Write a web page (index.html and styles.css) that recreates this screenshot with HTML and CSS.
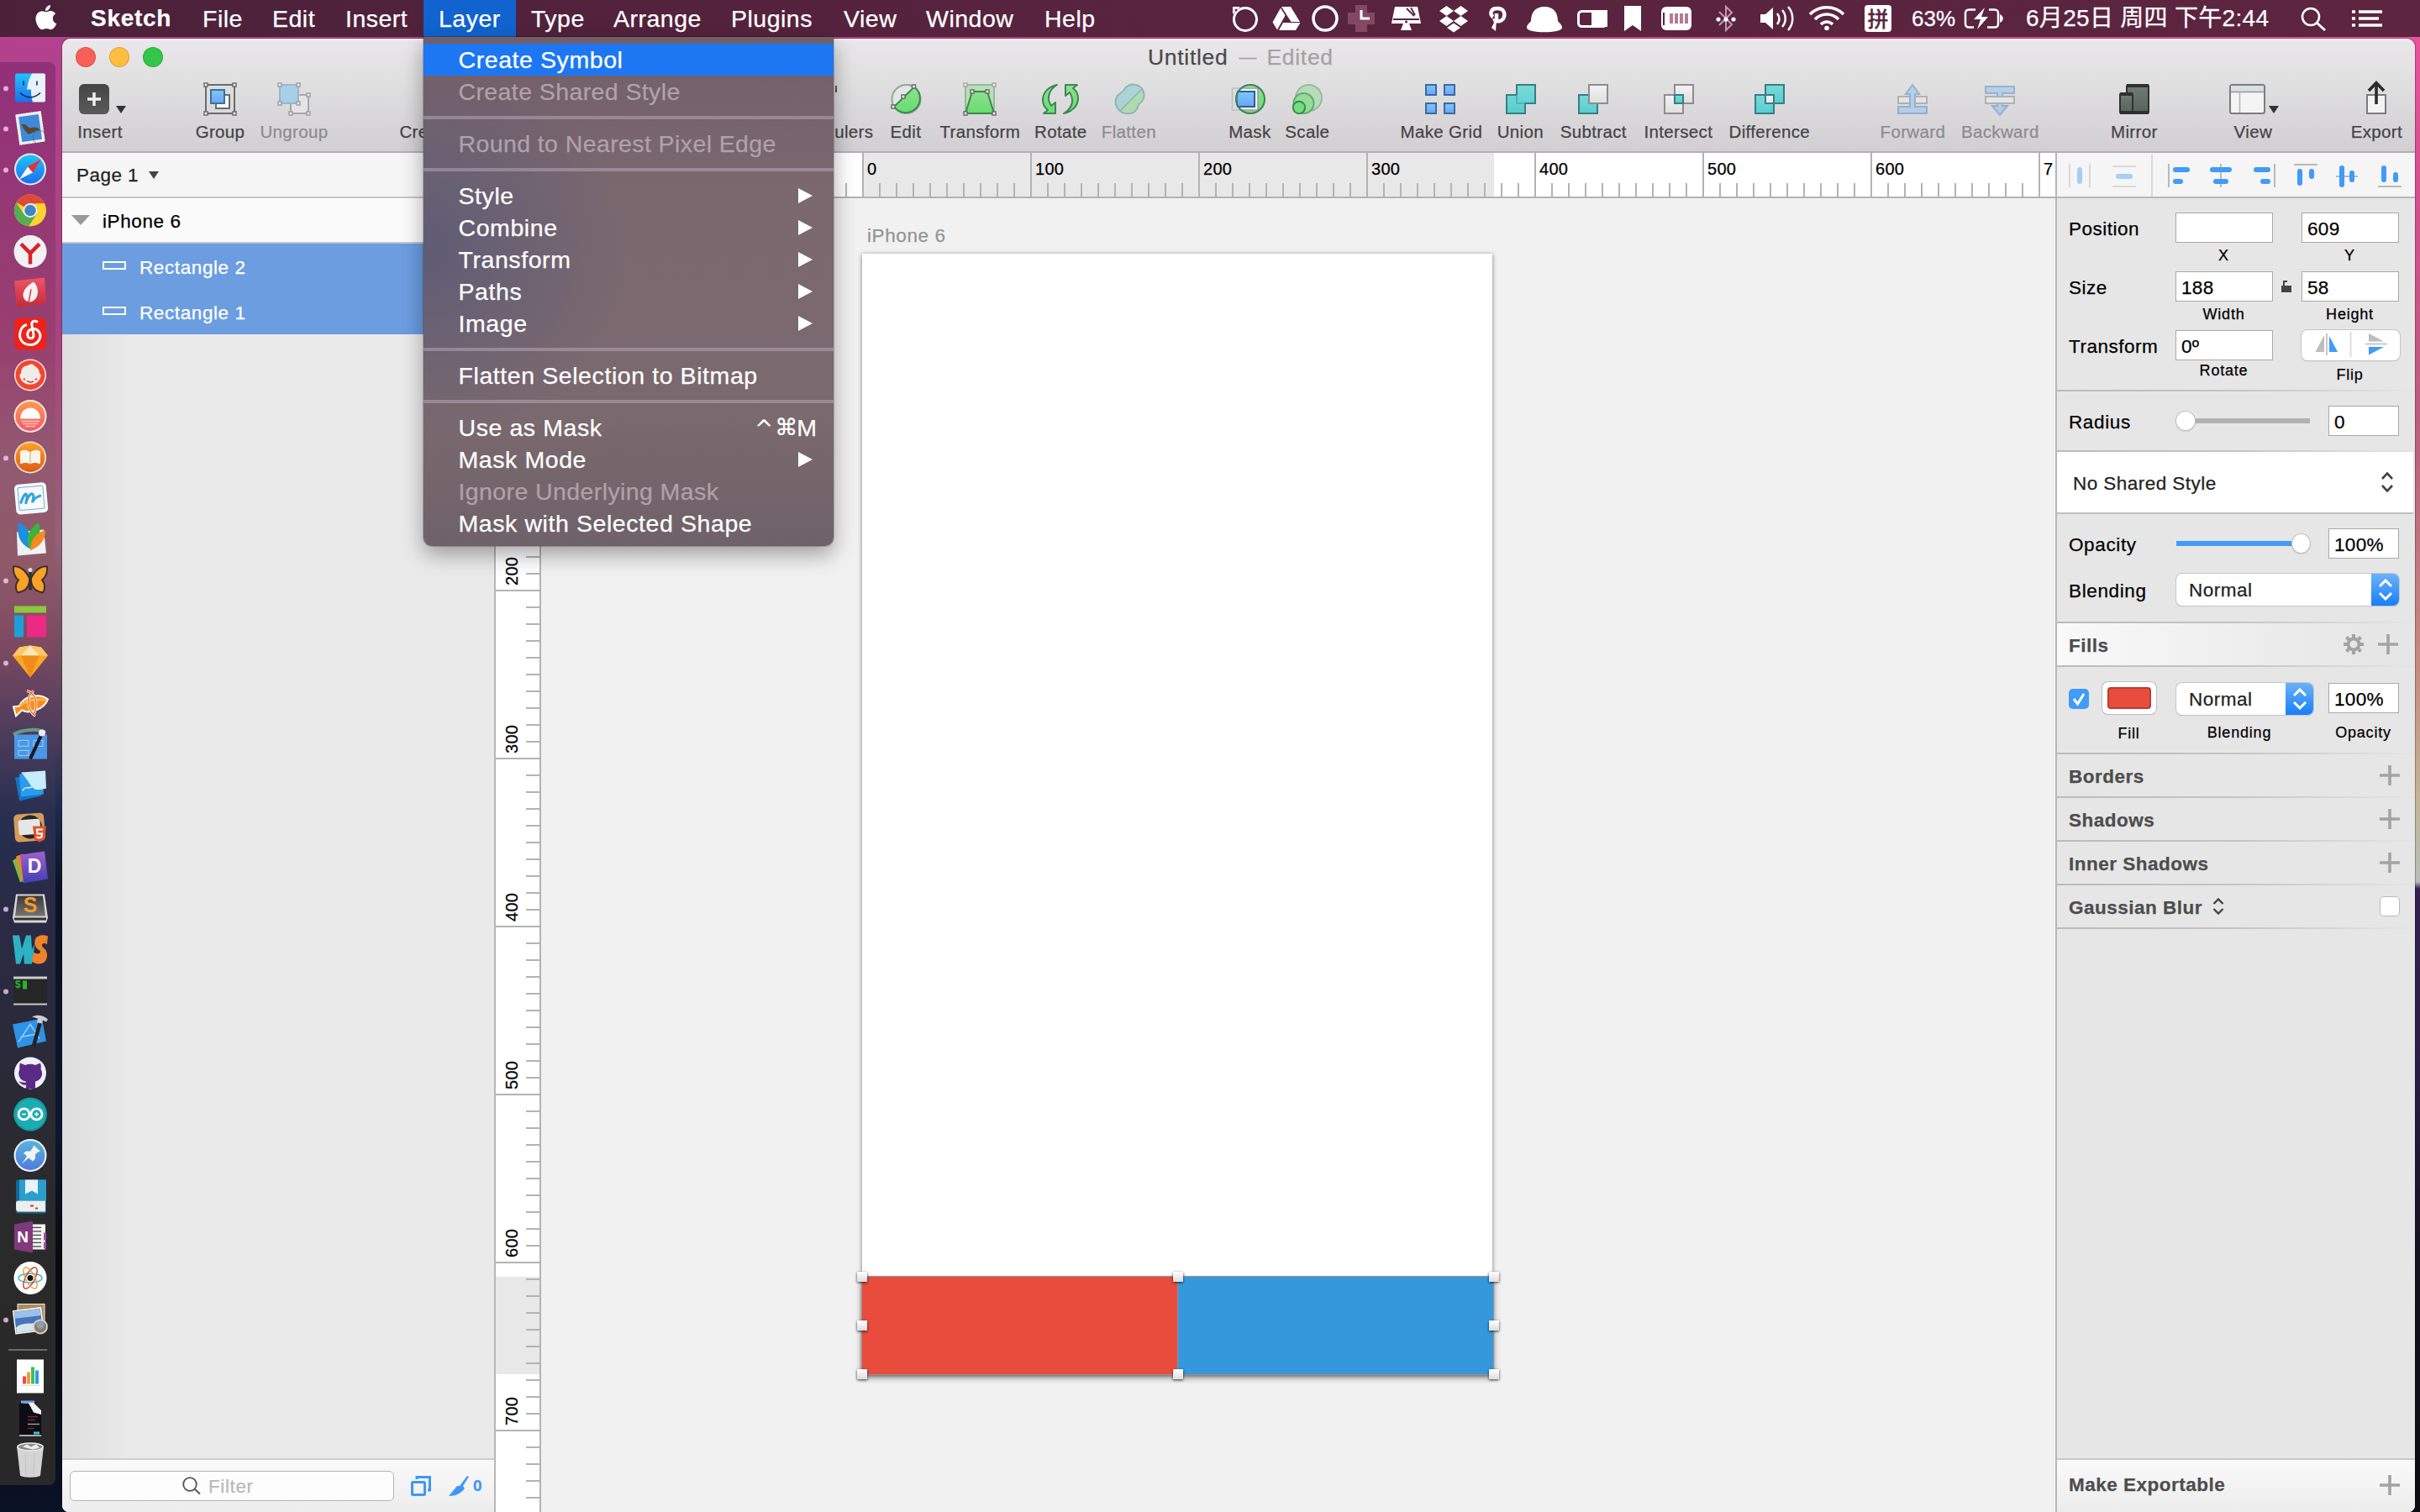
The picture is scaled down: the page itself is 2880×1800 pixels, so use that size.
FILE: index.html
```html
<!DOCTYPE html>
<html lang="zh">
<head>
<meta charset="utf-8">
<title>Untitled</title>
<link rel="stylesheet" href="styles.css">
</head>
<body>
<svg class="defs" width="0" height="0">
  <defs>
    <linearGradient id="gBlue" x1="0" y1="0" x2="0" y2="1"><stop offset="0" stop-color="#7cc8fb"/><stop offset="1" stop-color="#6ba6f2"/></linearGradient>
    <linearGradient id="gGreen" x1="0" y1="0" x2="0" y2="1"><stop offset="0" stop-color="#8fe08f"/><stop offset="1" stop-color="#66dd6e"/></linearGradient>
    <linearGradient id="gTeal" x1="0" y1="0" x2="0" y2="1"><stop offset="0" stop-color="#7adada"/><stop offset="1" stop-color="#58cdd0"/></linearGradient>
    <linearGradient id="gGray" x1="0" y1="0" x2="0" y2="1"><stop offset="0" stop-color="#f3f3f3"/><stop offset="1" stop-color="#dedede"/></linearGradient>
    <linearGradient id="gDark" x1="0" y1="0" x2="0" y2="1"><stop offset="0" stop-color="#454545"/><stop offset="1" stop-color="#5a5a5a"/></linearGradient>
    <linearGradient id="gScreen" x1="0" y1="0" x2="0" y2="1"><stop offset="0" stop-color="#6e7d76"/><stop offset="1" stop-color="#56625c"/></linearGradient>
    <linearGradient id="dSky" x1="0" y1="0" x2="0" y2="1"><stop offset="0" stop-color="#1fc4fb"/><stop offset="1" stop-color="#1b6ff0"/></linearGradient>
    <linearGradient id="dRed" x1="0" y1="0" x2="0" y2="1"><stop offset="0" stop-color="#ee5566"/><stop offset="1" stop-color="#c22a3c"/></linearGradient>
    <linearGradient id="dOrange" x1="0" y1="0" x2="0" y2="1"><stop offset="0" stop-color="#fda22a"/><stop offset="1" stop-color="#dd5c14"/></linearGradient>
    <linearGradient id="dSun" x1="0" y1="0" x2="0" y2="1"><stop offset="0" stop-color="#ff9a4a"/><stop offset="1" stop-color="#fa5668"/></linearGradient>
    <linearGradient id="dPurple" x1="0" y1="0" x2="0" y2="1"><stop offset="0" stop-color="#a35fd0"/><stop offset="1" stop-color="#3f3fb4"/></linearGradient>
    <linearGradient id="dPin" x1="0" y1="0" x2="0" y2="1"><stop offset="0" stop-color="#58b4dc"/><stop offset="1" stop-color="#4f7be0"/></linearGradient>
    <linearGradient id="dGray" x1="0" y1="0" x2="0" y2="1"><stop offset="0" stop-color="#3a3a3a"/><stop offset="1" stop-color="#747474"/></linearGradient>
  </defs>
</svg>

<header class="menubar">
  <svg class="apple" width="89" height="44" viewBox="0 0 89 44"><path fill="#fff" d="M60 6c.4 3.400-2.600 7-6 7-.4-3.300 2.700-6.700 6-7zM54.800 14.300c1.300 0 3-1.300 5.500-1.300 2.300 0 4.600 1.300 5.900 3.300-5 3-4.200 10 1 12-1 2.700-3.800 7-6.700 7-2 0-2.800-1.200-5.200-1.200s-3.300 1.200-5.200 1.200c-3.300 0-7.600-7-7.600-12.700 0-5.600 3.600-9.300 7.500-9.300 2.200 0 3.700 1 4.800 1z"/></svg>
  <nav class="menus">
    <span class="m m-app">Sketch</span><span class="m m-file">File</span><span class="m m-edit">Edit</span><span class="m m-insert">Insert</span><span class="m m-layer">Layer</span><span class="m m-type">Type</span><span class="m m-arrange">Arrange</span><span class="m m-plugins">Plugins</span><span class="m m-view">View</span><span class="m m-window">Window</span><span class="m m-help">Help</span>
  </nav>
  <div class="status">
    <svg width="45" height="44" viewBox="1460 0 45 44"><circle cx="1481" cy="23" r="13.500" fill="none" stroke="#fff" stroke-width="3"/><path d="M1466 8h9l-9 9z" fill="#fff"/><circle cx="1470" cy="12" r="1.500" fill="#5a233e"/></svg>
    <svg width="48" height="44" viewBox="1505 0 48 44"><g fill="#fff"><path d="M1524 8h11l11 18h-10.500z"/><path d="M1523 9.500l5.500 9-9.500 17-5.500-9z"/><path d="M1526 27h20.500l-5.500 9h-20z"/></g></svg>
    <svg width="46" height="44" viewBox="1553 0 46 44"><circle cx="1576" cy="22" r="14" fill="none" stroke="#fff" stroke-width="3.500"/></svg>
    <svg width="48" height="44" viewBox="1599 0 48 44"><path d="M1612 6h14v9h9v14h-9v9h-14v-9h-9v-14h9z" fill="#854862"/><path d="M1619 12v10h10" fill="none" stroke="#fff" stroke-width="3"/></svg>
    <svg width="56" height="44" viewBox="1647 0 56 44"><g fill="#fff"><path d="M1659 8h27l4 20h-35z"/><path d="M1669 28h7l3 8h-13z"/></g><path d="M1657 23h31M1673 10l9 9M1678 9l5 9" stroke="#5a233e" stroke-width="1.800"/><circle cx="1672.500" cy="26" r="1.500" fill="#5a233e"/></svg>
    <svg width="58" height="44" viewBox="1703 0 58 44"><g fill="#fff"><path d="M1720.500 7l8.500 6-8.500 6-8.500-6zM1737.500 7l8.500 6-8.500 6-8.500-6zM1720.500 19l8.500 6-8.500 6-8.500-6zM1737.500 19l8.500 6-8.500 6-8.500-6zM1729 27.500l8 5.500-8 5.500-8-5.500z"/></g></svg>
    <svg width="47" height="44" viewBox="1761 0 47 44"><path d="M1776 20c-4-2-4-10 5-10 8 0 9 6 8 10-1 4-5 6-9 5v-9" fill="none" stroke="#fff" stroke-width="4.500"/><path d="M1775 22l2 5-3 6 5 4 1-14z" fill="#fff"/></svg>
    <svg width="60" height="44" viewBox="1808 0 60 44"><path d="M1816 33c0-4 4-6 5-8 0-10 5-17 16-17s16 7 16 17c1 2 5 4 5 8 0 7-42 7-42 0z" fill="#fff"/></svg>
    <svg width="54" height="44" viewBox="1868 0 54 44"><rect x="1877.500" y="13.500" width="33" height="18" rx="4" fill="none" stroke="#fff" stroke-width="3"/><path d="M1893 12h19v20h-19z" fill="#fff"/></svg>
    <svg width="42" height="44" viewBox="1922 0 42 44"><path d="M1932 7h20v30l-10-7-10 7z" fill="#fff"/></svg>
    <svg width="60" height="44" viewBox="1964 0 60 44"><rect x="1976" y="8" width="36" height="28" rx="6" fill="#fff"/><path d="M1979 15v15" stroke="#5a233e" stroke-width="2"/><path d="M1988 16v12M1994 16v12M2000 16v12M2006 16v12" stroke="#b57a95" stroke-width="4"/></svg>
    <svg width="58" height="44" viewBox="2024 0 58 44"><path d="M2045 14l15 15-7 7V8l7 7-15 15" fill="none" stroke="#c796ad" stroke-width="2"/><g fill="#fff"><circle cx="2044" cy="23" r="2.600"/><circle cx="2053" cy="23" r="2.600"/><circle cx="2062" cy="23" r="2.600"/></g></svg>
    <svg width="60" height="44" viewBox="2082 0 60 44"><path d="M2094 17h6l9-8v26l-9-8h-6z" fill="#fff"/><path d="M2114 16c3 4 3 9 0 13M2120 12c5 6 5 14 0 20M2127 8c7 8 7 20 0 28" fill="none" stroke="#fff" stroke-width="2.500"/></svg>
    <svg width="66" height="44" viewBox="2142 0 66 44"><path d="M2153 17c11-11 29-11 40 0M2159 23c8-8 20-8 28 0M2166 29c4-4 10-4 14 0" fill="none" stroke="#fff" stroke-width="3.600"/><circle cx="2173" cy="33.500" r="2.800" fill="#fff"/></svg>
    <span class="ime">拼</span>
    <span class="pct">63%</span>
    <svg width="64" height="44" viewBox="2332 0 64 44"><g fill="none" stroke="#fff" stroke-width="2.500"><path d="M2350 11.500h-8a4 4 0 0 0-4 4v13a4 4 0 0 0 4 4h6M2366 11.500h7a4 4 0 0 1 4 4v13a4 4 0 0 1-4 4h-9"/></g><path d="M2379 17c5 2 5 8 0 10z" fill="#fff"/><path d="M2361 9l-13 14h8l-4 12 13-15h-8z" fill="#fff"/></svg>
    <span class="date">6月25日 周四 下午2:44</span>
    <svg width="70" height="44" viewBox="2716 0 70 44"><circle cx="2749" cy="20" r="10" fill="none" stroke="#fff" stroke-width="2.600"/><path d="M2756 27l10 9" stroke="#fff" stroke-width="3"/></svg>
    <svg width="92" height="44" viewBox="2786 0 92 44"><path d="M2798 14h4M2798 22h4M2798 30h4M2806 14h28M2806 22h24M2806 30h28" stroke="#fff" stroke-width="3.600"/></svg>
  </div>
</header>

<div class="desk">
  <aside class="dock">
    <svg class="on" viewBox="-36 -24.450 66 48.900"><rect x="-18" y="-17" width="36" height="34" rx="2" fill="url(#dSky)"/><path d="M2-17h14a2 2 0 0 1 2 2v30a2 2 0 0 1-2 2H3C1 10 1 6 1 2h-5C-3-6-1-12 2-17z" fill="#e8f1fa"/><path d="M-8-8v5M8-8v5M-12 6c7 7 17 7 24 0" stroke="#1b2c48" stroke-width="1.600" fill="none"/><circle cx="-29" cy="1" r="3"/></svg>
    <svg class="on" viewBox="-36 -24.450 66 48.900"><g transform="rotate(-8)"><rect x="-15" y="-18" width="30" height="36" fill="#f0f0f0" stroke="#fff" stroke-dasharray="2 1"/><rect x="-12" y="-15" width="24" height="30" fill="#3f8ad8"/><path d="M-10-6c6 0 6 4 10 6 5-1 9 0 11 4-5-1-8 3-14 3-2-3-5-6-7-13z" fill="#5d4630"/></g><circle cx="11" cy="11" r="8" fill="none" stroke="#555" opacity=".6"/><circle cx="-29" cy="1" r="3"/></svg>
    <svg class="on" viewBox="-36 -24.450 66 48.900"><circle r="19" fill="#e9eef2"/><circle r="17" fill="url(#dSky)"/><path d="M13-12L3 4-3-3z" fill="#ee2f2f"/><path d="M-13 12L3 4-3-3z" fill="#f6f6f6"/><circle cx="-29" cy="1" r="3"/></svg>
    <svg viewBox="-36 -24.450 66 48.900"><circle r="19" fill="#fdd32f"/><path d="M0 0L-16.500-9.500A19 19 0 0 1 17-8.500L0-8z" fill="#dd4a3a"/><path d="M-16.500-9.500A19 19 0 0 0-2 19L8 4-8 4z" fill="#55ae52"/><circle r="8.500" fill="#f4f4f4"/><circle r="6.800" fill="#3f86c8"/></svg>
    <svg viewBox="-36 -24.450 66 48.900"><circle r="19.500" fill="#f1f1f4"/><path d="M-11-9L0 2 11-9M0 1v14" stroke="#d8222a" stroke-width="4.500" fill="none"/></svg>
    <svg viewBox="-36 -24.450 66 48.900"><path d="M-19-14L17-18 19 13-16 18z" fill="url(#dRed)"/><path d="M4-13c8 8 6 22-4 24-10 0-14-14 4-24z" fill="#f5f1ee"/><path d="M1-4L-2 12" stroke="#d0394a" stroke-width="1.500"/></svg>
    <svg viewBox="-36 -24.450 66 48.900"><rect x="-19" y="-19" width="38" height="38" rx="6" fill="#ee2219"/><path d="M9-14c-5-3-8 0-7 4l2 11c1 6-9 6-7-2 1-5 9-7 13-2 5 7-1 16-10 16S-14 6-12-2c1-5 4-8 8-9" fill="none" stroke="#fff" stroke-width="3"/></svg>
    <svg viewBox="-36 -24.450 66 48.900"><circle r="19" fill="#f3e9e5"/><circle r="17.500" fill="#f2462e"/><path d="M-12 3c-1-2-1-4 1-5 0-6 4-10 8-9 1-2 6-3 8 0 4 2 6 5 6 9 2 1 2 3 1 5-3 11-21 11-24 0z" fill="#f0ece8"/><path d="M-4 7c3 2 6 2 8 0" stroke="#d33" stroke-width="1.500" fill="none"/><circle cx="-7" cy="5" r="1.300" fill="#e55"/><circle cx="7" cy="5" r="1.300" fill="#e55"/></svg>
    <svg viewBox="-36 -24.450 66 48.900"><circle r="19.500" fill="#f3e9e5"/><circle r="17.500" fill="url(#dSun)"/><path d="M-12 3a12 13 0 0 1 24 0z" fill="#fff"/><path d="M-11 6h22M-9 9h18M-6 12h12" stroke="#fbc3bd" stroke-width="1.400"/></svg>
    <svg class="on" viewBox="-36 -24.450 66 48.900"><circle r="19" fill="#f6ece0"/><circle r="17.500" fill="url(#dOrange)"/><path d="M-12-7c4-3 9-2 12 1 3-3 8-4 12-1V8c-4-2-9-2-12 0-3-2-8-2-12 0z" fill="#f8f4ea"/><path d="M0-6V8" stroke="#c8a985"/><circle cx="-29" cy="1" r="3"/></svg>
    <svg viewBox="-36 -24.450 66 48.900"><g transform="rotate(-5)"><rect x="-18" y="-17" width="38" height="36" rx="5" fill="#f7f9fb"/><rect x="-14" y="-13" width="30" height="27" rx="2" fill="none" stroke="#66b4e0"/><path d="M-12 6C-7-6-3-8-4 0l-2 7C-2-4 4-8 4-1l-2 7c4-8 7-5 11-8" fill="none" stroke="#2fa4dd" stroke-width="3"/></g></svg>
    <svg viewBox="-36 -24.450 66 48.900"><path d="M-16-8L16-11 19 17-15 20z" fill="#eef2f6"/><path d="M0 12C-16 4-15-8-14-20-2-14 2-4 0 12z" fill="#1b8fe0"/><path d="M0 12C-8 0 0-14 10-19 14-8 10 2 0 12z" fill="#3cb43c"/><path d="M0 14C0 0 8-8 18-10 18 2 12 8 0 14z" fill="#f58a1f"/></svg>
    <svg class="on" viewBox="-36 -24.450 66 48.900"><g fill="#f9a226" stroke="#3b302c" stroke-width="2"><path d="M-1-2C-6-13-14-17-20-16c-1 8 2 13 6 16-4 5-4 11-1 15C-7 14-2 9-1 2z"/><path d="M1-2C6-13 14-17 20-16c1 8-2 13-6 16 4 5 4 11 1 15C7 14 2 9 1 2z"/></g><path d="M0-10v22" stroke="#333" stroke-width="3.500"/><circle cy="-12" r="2.500" fill="#ddd"/><circle cx="-29" cy="1" r="3"/></svg>
    <svg viewBox="-36 -24.450 66 48.900"><path d="M-19-18h38v8h-38z" fill="#8fc63f"/><path d="M-19-7H-8v26h-11z" fill="#1ba0d9"/><path d="M-4-7h23v26H-4z" fill="#ec2a83"/></svg>
    <svg class="on" viewBox="-36 -24.450 66 48.900"><path d="M-21-8L-13-18 0-20 13-18 21-8 0 18z" fill="#f9a825"/><path d="M-21-8L-13-18 0-20 13-18 21-8z" fill="#fdc766"/><path d="M-11-8L0-20 11-8z" fill="#ffe6b4"/><path d="M-11-8H11L0 18z" fill="#f08c1a"/><circle cx="-29" cy="1" r="3"/></svg>
    <svg viewBox="-36 -24.450 66 48.900"><path d="M-20 4l7-1C-8-9 10-13 21-5 17 7-2 13-10 8l-7 7z" fill="#f88f1c" stroke="#fff" stroke-width="2"/><path d="M-12 2C-4-4 10-6 19-4" stroke="#fdb544" stroke-width="3" fill="none"/><path d="M-4-15c10 2 14 16 8 29M4-15C-5-9-4 8 6 15" fill="none" stroke="#fff" stroke-width="3"/><path d="M-4-15c10 2 14 16 8 29M4-15C-5-9-4 8 6 15" fill="none" stroke="#e86a2a" stroke-width="1.500"/></svg>
    <svg viewBox="-36 -24.450 66 48.900"><path d="M-19-12H20V17h-39z" fill="#4a97e6"/><path d="M-14-5h12v7h-12zM-14 7h12v6h-12zM4-5h11v7H4z" fill="none" stroke="#9fd0fb"/><path d="M-20-12c10-6 30-8 38-2" stroke="#6fbf9e" stroke-width="4" fill="none" opacity=".7"/><path d="M0 17L13-11" stroke="#1a1a22" stroke-width="4"/><circle cx="14" cy="-14" r="4" fill="#f9e8f6"/></svg>
    <svg viewBox="-36 -24.450 66 48.900"><path d="M-18-10L10-12 13 12-13 18z" fill="#1674c4"/><path d="M-13-14L13-15 16 10-11 13z" fill="#2a9cec"/><path d="M-9 6c4-8 8 0 12-6" stroke="#d6effc" stroke-width="1.500" fill="none"/><path d="M-11-16L18-18 19 3C12 5 6 5 4 3 0 0-2-6-11-16z" fill="#c6edfb"/></svg>
    <svg viewBox="-36 -24.450 66 48.900"><g transform="rotate(-4)"><rect x="-19" y="-16" width="36" height="33" rx="5" fill="#d59c58"/><circle r="14" fill="#262626"/><rect x="-14" y="-9" width="26" height="18" rx="3" fill="#e6e6e6"/></g><path d="M3-1h16l-2 16-6 3-6-3z" fill="#e5532d"/><path d="M15 3H8l.5 5H14l-.5 4-3 1-3-1" stroke="#fff" stroke-width="2" fill="none"/></svg>
    <svg viewBox="-36 -24.450 66 48.900"><path d="M-21-8l8-5 6 28-5 3z" fill="#7dbb3c"/><path d="M-17-13l8-3 4 32-4 2z" fill="#f0832a"/><path d="M-12-15L17-19 21 14-8 19z" fill="url(#dPurple)"/><text x="5" y="7" text-anchor="middle" class="glyph g-d">D</text></svg>
    <svg class="on" viewBox="-36 -24.450 66 48.900"><path d="M-17-17h34l4 28-2 6h-38l-2-6z" fill="#d6d6d6"/><path d="M-15-15h30l3 24h-36z" fill="url(#dGray)"/><path d="M-19 11h38v3h-38z" fill="#333"/><text y="5" text-anchor="middle" class="glyph g-s">S</text><circle cx="-29" cy="1" r="3"/></svg>
    <svg viewBox="-36 -24.450 66 48.900"><path d="M-21-17h8l3 16 5-16H1L2 0l5-10v-7L2 17h-9L-8 5l-4 12h-5z" fill="#2bb3c4"/><path d="M21-16C11-20 3-14 6-5c1 5 7 6 6 8-1 3-6 2-8 0L2 14c7 6 19 3 18-8C20-1 14-2 14-5c0-3 4-3 6-1z" fill="#f28227"/></svg>
    <svg class="on" viewBox="-36 -24.450 66 48.900"><rect x="-20" y="-17" width="40" height="34" fill="#262626"/><path d="M-20-17h40v3h-40zM-20 15h40v2h-40z" fill="#ccc"/><path d="M-9-12h5v10h-5z" fill="#2bb52b"/><text x="-18" y="-3" class="glyph g-t">$</text><circle cx="-29" cy="1" r="3"/></svg>
    <svg viewBox="-36 -24.450 66 48.900"><path d="M-21-9L14-16 19 11-15 19z" fill="#2d92e8"/><path d="M-14 12L0-9 11 8M-11 6L10 2" fill="none" stroke="#9cd2fb" stroke-width="1.500"/><path d="M4 17L12-12" stroke="#222" stroke-width="4.500"/><path d="M2-18c6-3 14-2 19 3l-2 3-4-2-1 4-6-1 1-5z" fill="#c9ced2"/></svg>
    <svg viewBox="-36 -24.450 66 48.900"><circle r="19" fill="#eef0fb"/><path d="M-12-12l6 2.500c4-1.500 8-1.500 12 0l6-2.500c1 3 1 5 .5 7 4 7 0 14-6.500 15v8.500h-11V14c-5 1-6-2-9-4 4 0 5 2 9 1v-1c-7-1-11-8-7.500-15-.5-2-.5-4 .5-7z" fill="#5a2a86"/></svg>
    <svg viewBox="-36 -24.450 66 48.900"><circle r="20" fill="#129aa0"/><circle r="18" fill="#1badb2"/><g fill="none" stroke="#fff" stroke-width="2.800"><circle cx="-7.500" r="6.500"/><circle cx="7.500" r="6.500"/></g><path d="M-10 0h5M5 0h5M7.500-2.500v5" stroke="#fff" stroke-width="1.500"/></svg>
    <svg viewBox="-36 -24.450 66 48.900"><circle r="19.500" fill="#f3f6fa"/><circle r="17.500" fill="url(#dPin)"/><path d="M4-12l8 7-3 1-3 3 0 5-3 3-5-4-8 7 6-9-4-4 3-2h5l3-4z" fill="#f0f2f4"/></svg>
    <svg viewBox="-36 -24.450 66 48.900"><rect x="-17" y="-20" width="36" height="40" rx="2" fill="#15678f"/><rect x="-13" y="-20" width="32" height="25" fill="#2b9ecb"/><path d="M-6-20H9v17l-7-4-8 4z" fill="#e7f3f8"/><path d="M-17 8c0-2 1-3 3-3h32v13h-32c-2 0-3-2-3-4z" fill="#eceef0"/><path d="M0 11h4M6 14h3" stroke="#c43b33" stroke-width="2"/></svg>
    <svg viewBox="-36 -24.450 66 48.900"><rect x="-2" y="-15" width="20" height="30" fill="#f2f2f2"/><path d="M3-11h10M3-6.500h10M3-2h10M3 2.500h10M3 7h10M3 11.500h10" stroke="#444" stroke-width="1.300"/><path d="M16-5h3v9h-3zM16 6h3v8h-3z" fill="#a34fa0"/><path d="M-19-15L3-19v38l-22-4z" fill="#80397b"/><text x="-9" y="7" text-anchor="middle" class="glyph g-n">N</text></svg>
    <svg viewBox="-36 -24.450 66 48.900"><circle r="19.500" fill="#fff"/><g fill="none" stroke-width="1.500"><ellipse rx="14" ry="5.500" stroke="#38b6cc"/><ellipse rx="14" ry="5.500" stroke="#c8443f" transform="rotate(-62)"/><ellipse rx="14" ry="5.500" stroke="#eba13c" transform="rotate(62)"/></g><circle r="3.500" fill="#111"/></svg>
    <svg class="on" viewBox="-36 -24.450 66 48.900"><rect x="-15" y="-18" width="32" height="24" fill="#b08b56" stroke="#f3f3f3"/><g transform="rotate(-7)"><rect x="-19" y="-12" width="33" height="27" fill="#4676b8" stroke="#fff" stroke-width="1.500"/><path d="M-18-11h31v8h-31z" fill="#9cc0ea"/><path d="M-18 8c9-7 20 0 31-4v10h-31z" fill="#d8e5ea"/></g><circle cx="12" cy="9" r="8" fill="#8c7a68" stroke="#cfcfcf" stroke-width="2"/><circle cx="12" cy="7" r="4.500" fill="#8aa0b4"/><circle cx="-29" cy="1" r="3"/></svg>
    <i class="dock-line"></i>
    <svg viewBox="-36 -24.450 66 48.900"><rect x="-16" y="-20" width="32" height="40" fill="#fff"/><path d="M-9 9V0h4v9z" fill="#f0445a"/><path d="M-4 9V-5h4V9z" fill="#f89a2b"/><path d="M1 9v-20h4V9z" fill="#37c25a"/><path d="M6 9V-7h4V9z" fill="#2f9be8"/><path d="M-12 11h24" stroke="#ddd"/></svg>
    <svg class="low" viewBox="-36 -24.450 66 48.900"><path d="M-11-21H5v4h-16z" fill="#6aa6ec"/><path d="M-13-18H4l9 9v29h-26z" fill="#0d0d14"/><path d="M-13 20.500h26" stroke="#dcdcdc" stroke-width="1.500"/><path d="M-12-18.500H4l9 9v5L4-7-2-18z" fill="#f4f4f4"/><path d="M-11-13h12v6h-12z" fill="#0d0d14"/><path d="M-3-2H9M-3 2h9M-3 12h8" stroke="#7c2530" stroke-width="1.500"/><path d="M-3 7h14" stroke="#999" stroke-width="1.500"/><path d="M4 16h7v3H4z" fill="#39c4d8"/></svg>
    <svg class="low" viewBox="-36 -24.450 66 48.900"><path d="M-16-17h32l-4 35c-2 3-22 3-24 0z" fill="#d4d4d4"/><ellipse cy="-16" rx="15" ry="4.500" fill="#8d8d8d" stroke="#eee" stroke-width="1.500"/><path d="M-9-16l5-3 5 3 6-3 4 4-8 2z" fill="#eee"/><path d="M-6-8l1 24M5-8L4 16" stroke="#c2c2c2"/></svg>
  </aside>

  <main class="window">
    <div class="toolbar">
      <div class="title"><span>Untitled</span><span class="dash">—</span><span class="dim">Edited</span></div>
      <i class="light red"></i><i class="light yellow"></i><i class="light green"></i>
      <div class="tools">
        <div class="tool t-insert"><svg width="70" height="56" viewBox="84 90 70 56"><rect x="94" y="100" width="36" height="36" rx="6" fill="url(#gDark)"/><path d="M112 110v16M104 118h16" stroke="#eee" stroke-width="3.500"/><path d="M138 126h12l-6 9z" fill="#333"/></svg><b>Insert</b></div>
        <div class="tool t-group"><svg width="76" height="56" viewBox="224 90 76 56"><rect x="245" y="101" width="34" height="34" fill="none" stroke="#6b6b6b" stroke-width="2"/><rect x="257" y="113" width="16" height="16" fill="#fafafa" stroke="#6b6b6b" stroke-width="2"/><rect x="251" y="107" width="16" height="16" fill="url(#gBlue)" stroke="#3f6f9f" stroke-width="2"/><g fill="#fff" stroke="#6b6b6b" stroke-width="1.500"><rect x="243" y="99" width="4" height="4"/><rect x="277" y="99" width="4" height="4"/><rect x="243" y="133" width="4" height="4"/><rect x="277" y="133" width="4" height="4"/></g></svg><b>Group</b></div>
        <div class="tool off t-ungroup"><svg width="100" height="56" viewBox="300 90 100 56"><rect x="346" y="113" width="21" height="22" fill="#eee" stroke="#777" stroke-width="2"/><rect x="333" y="101" width="22" height="22" fill="#74c3f3" stroke="#5b8fc0" stroke-width="2"/><g fill="#fff" stroke="#666" stroke-width="1.500"><rect x="331" y="99" width="4" height="4"/><rect x="353" y="99" width="4" height="4"/><rect x="331" y="121" width="4" height="4"/><rect x="353" y="121" width="4" height="4"/><rect x="365" y="111" width="4" height="4"/><rect x="344" y="133" width="4" height="4"/><rect x="365" y="133" width="4" height="4"/></g></svg><b>Ungroup</b></div>
        <div class="tool t-create"><svg width="136" height="56" viewBox="476 90 136 56"></svg><b>Create Symbol</b></div>
        <div class="tool t-rulers"><svg width="60" height="56" viewBox="978 90 60 56"><path d="M993 102v8" stroke="#555" stroke-width="2"/></svg><b>Rulers</b></div>
        <div class="tool t-edit"><svg width="47" height="56" viewBox="1052 90 47 56"><circle cx="1076.500" cy="118" r="17" fill="#e4e6e4" stroke="#93a893" stroke-width="2"/><path d="M1086 103.500A17 17 0 1 1 1062 127z" fill="url(#gGreen)" stroke="#3d8556" stroke-width="2"/><g fill="#fff" stroke="#6b6b6b" stroke-width="1.500"><rect x="1083.500" y="101" width="4" height="4"/><rect x="1071" y="113" width="4" height="4"/><rect x="1059" y="125" width="4" height="4"/></g></svg><b>Edit</b></div>
        <div class="tool t-transform"><svg width="110" height="56" viewBox="1109 90 110 56"><rect x="1147" y="101" width="34" height="34" fill="#b9dfb9" stroke="#93bb9b" stroke-width="2"/><path d="M1155 109h18l8 26h-34z" fill="url(#gGreen)" stroke="#3d8556" stroke-width="2"/><g fill="#fff" stroke="#6b6b6b" stroke-width="1.500"><rect x="1153" y="107" width="4" height="4"/><rect x="1171" y="107" width="4" height="4"/><rect x="1145" y="133" width="4" height="4"/><rect x="1179" y="133" width="4" height="4"/></g><g fill="#eee" stroke="#aaa" stroke-width="1.500"><rect x="1145" y="99" width="4" height="4"/><rect x="1179" y="99" width="4" height="4"/></g></svg><b>Transform</b></div>
        <div class="tool t-rotate"><svg width="74" height="56" viewBox="1223 90 74 56"><g fill="url(#gGreen)" stroke="#3d8556" stroke-width="2" stroke-linejoin="round"><path d="M1256 101c-10 2-17 9-17 18 0 5 2 9 6 12l-5 4h14v-13l-5 4c-6-9-3-19 7-25z"/><path d="M1264 135c10-2 17-9 17-18 0-5-2-9-6-12l5-4h-14v13l5-4c6 9 3 19-7 25z"/></g></svg><b>Rotate</b></div>
        <div class="tool off t-flatten"><svg width="80" height="56" viewBox="1301 90 80 56"><path d="M1337 105c6-7 17-5 21 2 4 8 0 14-5 17-2 10-9 12-15 11-9-1-14-10-12-17 1-7 9-7 11-13z" fill="#7ccdd0" stroke="#4a8e92" stroke-width="2"/><path d="M1357 106c5 8 1 15-4 18-2 10-9 12-15 11-3 0-5-1-7-3z" fill="#84dc86" stroke="#4a8e92" stroke-width="1.500"/></svg><b>Flatten</b></div>
        <div class="tool t-mask"><svg width="60" height="56" viewBox="1455 90 60 56"><rect x="1464.500" y="105" width="30" height="26" fill="#ddd" stroke="#bdbdbd" stroke-width="1.500"/><circle cx="1486" cy="118" r="17" fill="url(#gGreen)"/><path d="M1476 104h19v28h-19a17 17 0 0 1 0-28z" fill="#f2f2f2"/><path d="M1474 105h21v26h-21" fill="none" stroke="#999" stroke-width="1.500"/><path d="M1471 109h20v18h-20c-2-6-2-12 0-18z" fill="url(#gBlue)" stroke="#2d609b" stroke-width="2"/><circle cx="1486" cy="118" r="17" fill="none" stroke="#3d8556" stroke-width="2"/></svg><b>Mask</b></div>
        <div class="tool t-scale"><svg width="65" height="56" viewBox="1521 90 65 56"><circle cx="1555.500" cy="116.500" r="15.500" fill="#b8dcba" stroke="#93bd9b" stroke-width="2"/><circle cx="1549.500" cy="123" r="12" fill="#94dc98" stroke="#62a873" stroke-width="2"/><circle cx="1544" cy="128" r="7.200" fill="#72e07a" stroke="#3d8556" stroke-width="2"/></svg><b>Scale</b></div>
        <div class="tool t-grid"><svg width="110" height="56" viewBox="1658 90 110 56"><g fill="url(#gBlue)" stroke="#3b6aa6" stroke-width="2"><rect x="1695" y="101" width="12" height="12"/><rect x="1717" y="101" width="12" height="12"/><rect x="1695" y="123" width="12" height="12"/><rect x="1717" y="123" width="12" height="12"/></g></svg><b>Make Grid</b></div>
        <div class="tool t-union"><svg width="70" height="56" viewBox="1772 90 70 56"><path d="M1803 101h22v22h-12v12h-22v-22h12z" fill="url(#gTeal)" stroke="#367f82" stroke-width="2"/><path d="M1803 113v10h10" fill="none" stroke="#52a6a8" stroke-width="1.500"/></svg><b>Union</b></div>
        <div class="tool t-subtract"><svg width="96" height="56" viewBox="1846 90 96 56"><rect x="1877" y="113" width="22" height="22" fill="url(#gTeal)" stroke="#367f82" stroke-width="2"/><rect x="1889" y="101" width="22" height="22" fill="url(#gGray)" stroke="#8d8d8d" stroke-width="2"/></svg><b>Subtract</b></div>
        <div class="tool t-intersect"><svg width="96" height="56" viewBox="1947 90 96 56"><g fill="url(#gGray)" stroke="#8d8d8d" stroke-width="2"><rect x="1991" y="101" width="22" height="22"/><rect x="1979" y="113" width="22" height="22"/></g><rect x="1991" y="113" width="10" height="10" fill="url(#gTeal)" stroke="#367f82" stroke-width="2"/></svg><b>Intersect</b></div>
        <div class="tool t-difference"><svg width="111" height="56" viewBox="2048 90 111 56"><g fill="url(#gTeal)" stroke="#367f82" stroke-width="2"><rect x="2099" y="101" width="22" height="22"/><rect x="2087" y="113" width="22" height="22"/></g><rect x="2099" y="113" width="10" height="10" fill="#eee" stroke="#367f82" stroke-width="2"/></svg><b>Difference</b></div>
        <div class="tool off t-forward"><svg width="90" height="56" viewBox="2229 90 90 56"><rect x="2257" y="115" width="34" height="8" fill="#eee" stroke="#888" stroke-width="2"/><path d="M2274 101l8 11h-5v15h14v8h-34v-8h14v-15h-5z" fill="#8cc4f2" stroke="#5486bd" stroke-width="2"/></svg><b>Forward</b></div>
        <div class="tool off t-backward"><svg width="110" height="56" viewBox="2323 90 110 56"><path d="M2361 103h34v8h-14v15h6l-9 11-9-11h6v-15h-14z" fill="#8cc4f2" stroke="#5486bd" stroke-width="2"/><rect x="2361" y="115" width="34" height="8" fill="#eee" stroke="#888" stroke-width="2"/></svg><b>Backward</b></div>
        <div class="tool t-mirror"><svg width="91" height="56" viewBox="2492 90 91 56"><rect x="2529" y="101" width="26" height="34" rx="2" fill="url(#gScreen)" stroke="#2f3130" stroke-width="2"/><path d="M2529 102h26M2529 134h26" stroke="#2f3130" stroke-width="4"/><rect x="2521" y="111" width="15" height="24" rx="2" fill="url(#gScreen)" stroke="#2f3130" stroke-width="2"/><path d="M2521 112h15M2521 134h15" stroke="#2f3130" stroke-width="4"/></svg><b>Mirror</b></div>
        <div class="tool t-view"><svg width="80" height="56" viewBox="2639 90 80 56"><rect x="2652" y="101" width="41" height="34" rx="2.500" fill="#f4f4f4" stroke="#7c7c7c" stroke-width="2"/><path d="M2653 102h39v7h-39z" fill="#dcdfdf"/><path d="M2653 109.500h39" stroke="#8d9a9e" stroke-width="1.500"/><path d="M2663.500 110v24" stroke="#b5b5b5" stroke-width="1.500"/><path d="M2698 126h12l-6 9z" fill="#333"/></svg><b>View</b></div>
        <div class="tool t-export"><svg width="80" height="56" viewBox="2786 90 80 56"><rect x="2815" y="113" width="22" height="22" fill="#f3f3f3" stroke="#7c7c7c" stroke-width="2"/><path d="M2826 124V99M2817 108l9-9.500 9 9.500" fill="none" stroke="#2b2b2b" stroke-width="3.600"/></svg><b>Export</b></div>
      </div>
    </div>

    <div class="body">
      <section class="layers">
        <div class="page-row"><span>Page 1</span><svg width="12" height="9" viewBox="0 0 12 9"><path d="M0 0h12L6 9z" fill="#444"/></svg></div>
        <div class="artboard-row"><svg width="22" height="12" viewBox="0 0 22 12"><path d="M0 0h22L11 12z" fill="#999"/></svg><span>iPhone 6</span></div>
        <div class="layer-row"><i></i><span>Rectangle 2</span></div>
        <div class="layer-row"><i></i><span>Rectangle 1</span></div>
        <div class="layer-fill"></div>
        <div class="layer-foot">
          <div class="filter"><svg width="22" height="22" viewBox="0 0 22 22"><circle cx="9" cy="9" r="7.800" fill="none" stroke="#555" stroke-width="1.800"/><path d="M14.500 14.500l6.500 6" stroke="#555" stroke-width="2"/></svg><span>Filter</span></div>
          <svg class="copy" width="24" height="24" viewBox="0 0 24 24"><path d="M7 4V1.500h15.500V17H20" fill="none" stroke="#3f97f7" stroke-width="3"/><rect x="1.500" y="7.500" width="15" height="15" rx="1" fill="none" stroke="#3f97f7" stroke-width="3"/></svg>
          <svg class="knife" width="24" height="24" viewBox="0 0 24 24"><path d="M22 0l2 1-7 11 2 3c-4 5-9 9-19 9l10-12 3 0z" fill="#3f97f7"/></svg>
          <strong>0</strong>
        </div>
      </section>

      <section class="stage">
        <div class="ruler-top"><span>0</span><span>100</span><span>200</span><span>300</span><span>400</span><span>500</span><span>600</span><span class="end">7</span></div>
        <div class="stage-main">
          <div class="ruler-left"><span class="first">0</span><span>100</span><span>200</span><span>300</span><span>400</span><span>500</span><span>600</span><span>700</span></div>
          <div class="canvas">
            <div class="board-name">iPhone 6</div>
            <div class="board">
              <div class="shapes"><div class="shape a"></div><div class="shape b"></div>
                <i class="h tl"></i><i class="h tc"></i><i class="h tr"></i><i class="h ml"></i><i class="h mr"></i><i class="h bl"></i><i class="h bc"></i><i class="h br"></i>
              </div>
            </div>
          </div>
        </div>
      </section>

      <section class="inspector">
        <div class="align"><svg width="426" height="52" viewBox="2448 182 426 52">
          <g stroke="#d9d9d9" stroke-width="2"><path d="M2463 195v28M2487 195v28M2514 198h28M2514 222h28M2561 184v50"/></g>
          <g fill="#a2d0f8"><rect x="2472" y="199" width="6" height="20" rx="3"/><rect x="2518" y="207" width="20" height="6" rx="3"/></g>
          <g stroke="#b9b9b9" stroke-width="2"><path d="M2581 195v28M2643 195v28M2707 195v28M2730 196h28M2780 210h26M2830 222h28"/></g>
          <g fill="#409bf9"><rect x="2586" y="199" width="20" height="6" rx="3"/><rect x="2586" y="213" width="12" height="6" rx="3"/><rect x="2630" y="199" width="26" height="6" rx="3"/><rect x="2634" y="213" width="18" height="6" rx="3"/><rect x="2682" y="199" width="20" height="6" rx="3"/><rect x="2690" y="213" width="12" height="6" rx="3"/><rect x="2734" y="201" width="6" height="20" rx="3"/><rect x="2748" y="201" width="6" height="12" rx="3"/><rect x="2784" y="197" width="6" height="26" rx="3"/><rect x="2796" y="203" width="6" height="14" rx="3"/><rect x="2834" y="197" width="6" height="20" rx="3"/><rect x="2848" y="205" width="6" height="12" rx="3"/></g>
        </svg></div>

        <div class="geometry">
          <div class="grow"><label>Position</label><div><div class="field"></div><small>X</small></div><span></span><div><div class="field">609</div><small>Y</small></div></div>
          <div class="grow"><label>Size</label><div><div class="field">188</div><small>Width</small></div><span class="lock"><svg width="12" height="16" viewBox="0 0 12 16"><path d="M0 7h12v8H0z" fill="#444"/><path d="M3 8V2h4" fill="none" stroke="#444" stroke-width="2"/></svg></span><div><div class="field">58</div><small>Height</small></div></div>
          <div class="grow"><label>Transform</label><div><div class="field">0º</div><small class="up">Rotate</small></div><span></span><div><div class="flip"><svg width="116" height="35" viewBox="2738 394 116 35"><path d="M2755 420v-1l10-19v20z" fill="#bdbdbd"/><path d="M2771 401l10 19h-10z" fill="#409bf9"/><path d="M2768 398v26M2814 410.500h26" stroke="#c9c9c9" stroke-width="2"/><path d="M2796.500 396v30" stroke="#dcdcdc" stroke-width="2"/><path d="M2818 398l18 9.500h-18z" fill="#bdbdbd"/><path d="M2818 414h18l-18 9.500z" fill="#409bf9"/></svg></div><small class="down">Flip</small></div></div>
        </div>

        <div class="radius"><label>Radius</label><div class="slider"><i></i></div><div class="field narrow">0</div></div>
        <div class="shared"><span>No Shared Style</span><svg width="14" height="24" viewBox="0 0 14 24"><path d="M1 8l6-6.500L13 8M1 16l6 6.500 6-6.500" fill="none" stroke="#444" stroke-width="2.600"/></svg></div>
        <div class="opacity-row"><label>Opacity</label><div class="slider full"><i></i></div><div class="field narrow">100%</div></div>
        <div class="blend-row"><label>Blending</label><div class="select"><span>Normal</span><em><svg width="16" height="26" viewBox="0 0 16 26"><path d="M1 9l7-7 7 7M1 17l7 7 7-7" fill="none" stroke="#fff" stroke-width="3"/></svg></em></div></div>

        <div class="head fills"><h4>Fills</h4><svg class="gear" width="24" height="24" viewBox="-12 -12 24 24"><circle r="6.500" fill="none" stroke="#a3a3a3" stroke-width="4"/><path d="M0-12v4M0 8v4M-12 0h4M8 0h4M-8.500-8.500l3 3M5.500 5.500l3 3M-8.500 8.500l3-3M5.500-5.500l3-3" stroke="#a3a3a3" stroke-width="4"/></svg><svg class="plus" width="24" height="24" viewBox="0 0 24 24"><path d="M12 0v24M0 12h24" stroke="#a3a3a3" stroke-width="3.600"/></svg></div>
        <div class="fill-row">
          <div class="check"><svg width="24" height="24" viewBox="0 0 24 24"><path d="M6 12l4.500 6L18 6" fill="none" stroke="#fff" stroke-width="3"/></svg></div>
          <div class="col well-col"><div class="well"><i></i></div><small>Fill</small></div>
          <div class="col blend-col"><div class="select"><span>Normal</span><em><svg width="16" height="26" viewBox="0 0 16 26"><path d="M1 9l7-7 7 7M1 17l7 7 7-7" fill="none" stroke="#fff" stroke-width="3"/></svg></em></div><small>Blending</small></div>
          <div class="col op-col"><div class="field narrow">100%</div><small>Opacity</small></div>
        </div>
        <div class="head"><h4>Borders</h4><svg class="plus" width="24" height="24" viewBox="0 0 24 24"><path d="M12 0v24M0 12h24" stroke="#a3a3a3" stroke-width="3.600"/></svg></div>
        <div class="head"><h4>Shadows</h4><svg class="plus" width="24" height="24" viewBox="0 0 24 24"><path d="M12 0v24M0 12h24" stroke="#a3a3a3" stroke-width="3.600"/></svg></div>
        <div class="head"><h4>Inner Shadows</h4><svg class="plus" width="24" height="24" viewBox="0 0 24 24"><path d="M12 0v24M0 12h24" stroke="#a3a3a3" stroke-width="3.600"/></svg></div>
        <div class="head"><h4>Gaussian Blur</h4><svg class="updown" width="14" height="20" viewBox="0 0 14 20"><path d="M1.500 7L7 1.500 12.500 7M1.500 13L7 18.500l5.500-5.500" fill="none" stroke="#444" stroke-width="2.400"/></svg><i class="box"></i></div>
        <div class="blank"></div>
        <div class="export-foot"><h4>Make Exportable</h4><svg class="plus" width="24" height="24" viewBox="0 0 24 24"><path d="M12 0v24M0 12h24" stroke="#a3a3a3" stroke-width="3.600"/></svg></div>
      </section>
    </div>
  </main>
</div>

<ul class="dropdown">
  <li class="sel">Create Symbol</li>
  <li class="dis">Create Shared Style</li>
  <li class="sep"></li>
  <li class="dis">Round to Nearest Pixel Edge</li>
  <li class="sep"></li>
  <li>Style<i></i></li>
  <li>Combine<i></i></li>
  <li>Transform<i></i></li>
  <li>Paths<i></i></li>
  <li>Image<i></i></li>
  <li class="sep"></li>
  <li>Flatten Selection to Bitmap</li>
  <li class="sep"></li>
  <li>Use as Mask<kbd><span class="ctrl">^</span><span class="cmd">⌘</span><span>M</span></kbd></li>
  <li>Mask Mode<i></i></li>
  <li class="dis">Ignore Underlying Mask</li>
  <li>Mask with Selected Shape</li>
</ul>
</body>
</html>
```
FILE: styles.css
```css
* { box-sizing: border-box; }
body {
  margin: 0;
  width: 2880px;
  height: 1800px;
  overflow: hidden;
  position: relative;
  font-family: "Liberation Sans", "Noto Sans CJK SC", sans-serif;
  font-size: 22.500px;
  letter-spacing: .6px;
  -webkit-text-stroke: .25px currentColor;
  color: #000;
  background:
    linear-gradient(#f0529c 0, #d0508c 250px, #b95e7e 500px, #c48c80 800px, #bfb69a 960px, #b5bdb8 1050px, #35204f 1058px, #2c1e48 1250px, #14121e 1500px, #0c0c10 1800px) right 0 top 0 / 100px 100% no-repeat,
    linear-gradient(90deg, #b4418f, #c63f86 50%, #f0529c) 0 0 / 100% 60px no-repeat,
    linear-gradient(#b4418f 0, #a8447f 400px, #96607a 640px, #7b5360 740px, #54405c 860px, #1d2c4e 960px, #0c1224 1060px, #0d1730 1350px, #0a0a10 1500px, #0a1226 1800px);
}
.defs { position: absolute; }
svg { display: block; flex: none; -webkit-text-stroke: 0; }
i { display: block; font-style: normal; }

/* menu bar */
.menubar {
  height: 44px;
  display: flex;
  color: #fff;
  font-size: 28.500px;
  line-height: 44px;
  background: linear-gradient(90deg, #4b2139, #57233e 40%, #5d253f);
}
.menus { display: flex; letter-spacing: .5px; }
.m { padding-left: 18px; white-space: nowrap; }
.m-app { width: 134px; padding-left: 19px; font-weight: bold; font-size: 28px; letter-spacing: .7px; }
.m-file { width: 83px; }
.m-edit { width: 88px; }
.m-insert { width: 110px; padding-left: 17px; }
.m-layer { width: 110px; background: #1163cf; }
.m-type { width: 99px; }
.m-arrange { width: 139px; padding-left: 17px; }
.m-plugins { width: 135px; }
.m-view { width: 98px; padding-left: 17px; }
.m-window { width: 140px; padding-left: 17px; }
.m-help { width: 100px; }
.status { display: flex; margin-left: 136px; }
.ime {
  width: 32px; height: 32px; margin: 6px 0 0 10px;
  border-radius: 4px; background: #fff; color: #5a233e;
  font: 500 25px/31px "Noto Sans CJK SC", sans-serif; letter-spacing: 0; text-align: center;
}
.pct { width: 82px; padding-left: 24px; font-size: 26px; letter-spacing: 0; }
.date { width: 320px; padding-left: 14px; font-size: 28px; letter-spacing: .3px; white-space: nowrap; }

/* dock */
.desk { display: flex; height: 1756px; }
.dock {
  width: 66px; height: 1694px; margin: 30px 8px 0 0; padding-top: 5.500px;
  display: flex; flex-direction: column;
  border-radius: 0 8px 8px 0;
  background: linear-gradient(#92307a 0, #984070 330px, #925a70 480px, #8e5a68 600px, #7e4a62 690px, #4c3c5c 800px, #272e4f 900px, #2a2a44 1030px, #2a2a35 1230px, #2a2a2a 1400px, #282828);
}
.dock svg { width: 66px; height: 48.900px; overflow: visible; }
.dock .low { margin-top: 1.500px; }
.on circle:last-child { fill: rgba(255,215,245,.75); }
.dock-line { width: 46px; height: 2px; margin: 10.500px 0 6px 10px; background: #6a6a6a; }
.glyph { font-family: "Liberation Sans", sans-serif; font-weight: bold; letter-spacing: 0; }
.g-d { font-size: 23px; fill: #fff; }
.g-s { font-size: 25px; fill: #f89a2c; }
.g-t { font-size: 12px; fill: #2bb52b; }
.g-n { font-size: 19px; fill: #fff; }

/* window */
.window {
  width: 2800px; height: 1754px; margin-top: 2px;
  display: flex; flex-direction: column;
  border-radius: 10px 10px 8px 8px; overflow: hidden;
  background: #f1f1f1;
  box-shadow: 0 0 0 1px rgba(0,0,0,.25);
}
.toolbar {
  height: 136px; position: relative;
  border-bottom: 2px solid #b1b0b2;
  background: linear-gradient(#f4f3f4 0, #e9e7e9 3px, #e2e1e2 45px, #d1cfd2 100%);
}
.title {
  height: 44px; display: flex; align-items: center; padding-left: 1292px;
  font-size: 26.500px; letter-spacing: .7px; color: #4b4a4c;
}
.dash { font-size: 21px; width: 20px; margin: 0 13px 0 13px; color: #a3a2a5; letter-spacing: 0; }
.dim { color: #a3a2a5; }
.light { position: absolute; top: 10px; width: 24px; height: 24px; border-radius: 50%; border: 1px solid rgba(0,0,0,.13); }
.red { left: 16px; background: #f95f58; }
.yellow { left: 56px; background: #fdbd3f; }
.green { left: 96px; background: #32c748; }
.tools { display: flex; }
.tool { flex: none; display: flex; flex-direction: column; align-items: center; }
.tool b { font-weight: normal; font-size: 20.500px; line-height: 22px; letter-spacing: .35px; color: #454346; white-space: nowrap; }
.off { opacity: .5; }
.t-insert { margin-left: 10px; }
.t-group { margin-left: 70px; }
.t-create { margin-left: 76px; width: 136px; }
.t-create b { padding-left: 3px; }
.t-rulers { margin-left: 366px; }
.t-rulers b { padding-right: 2px; }
.t-edit { margin-left: 13px; }
.t-transform { margin-left: 10px; }
.t-rotate, .t-flatten, .t-union, .t-subtract, .t-backward { margin-left: 4px; }
.t-mask { margin-left: 74px; }
.t-scale { margin-left: 6px; }
.t-grid { margin-left: 72px; }
.t-intersect, .t-difference { margin-left: 5px; }
.t-forward { margin-left: 70px; }
.t-mirror { margin-left: 59px; }
.t-view { margin-left: 56px; }
.t-export { margin-left: 67px; }
.body { flex: 1; display: flex; min-height: 0; }

/* layer list */
.layers { width: 516px; display: flex; flex-direction: column; border-right: 2px solid #b7b7b7; background: linear-gradient(90deg, #dedede, #eaeaea 80px); }
.page-row { height: 54px; display: flex; align-items: center; gap: 12px; padding-left: 17px; border-bottom: 2px solid #c6c6c6; background: #f5f5f5; letter-spacing: .45px; color: #222; }
.page-row span { padding-top: 1px; }
.artboard-row { height: 54px; display: flex; align-items: center; gap: 15px; padding: 4px 0 0 11px; border-bottom: 2px solid #c6c6c6; background: #fafafa; }
.artboard-row svg { margin-top: -5px; }
.layer-row { height: 54px; display: flex; align-items: center; gap: 16px; padding: 3px 0 0 48px; background: #6b9de0; color: #fff; }
.layer-row i { width: 28px; height: 10px; border: 2px solid #fff; margin-top: -6px; }
.layer-fill { flex: 1; }
.layer-foot { height: 64px; display: flex; align-items: center; border-top: 2px solid #cfcfcf; background: linear-gradient(#fafafa, #ececec); }
.filter { width: 386px; height: 36px; margin-left: 9px; padding-left: 133px; border: 1.500px solid #b4b4b4; border-radius: 6px; background: #fdfdfd; display: flex; align-items: center; gap: 9px; color: #b9b9b9; }
.filter span { padding-top: 2px; }
.copy { margin-left: 20px; }
.knife { margin-left: 21px; }
.layer-foot strong { margin-left: 5px; font-size: 19px; color: #3f97f7; }

/* stage */
.stage { width: 1856px; display: flex; flex-direction: column; }
.ruler-top {
  height: 54px; padding-left: 442px; display: flex; overflow: hidden;
  border-bottom: 2px solid #b3b3b3;
  font-size: 20px; line-height: 38px; letter-spacing: .3px;
  background:
    linear-gradient(90deg, #b3b3b3 2px, transparent 2px) 36px 0 / 200px 100% repeat-x,
    linear-gradient(90deg, #b3b3b3 2px, transparent 2px) 16px 36px / 20px 16px repeat-x,
    linear-gradient(#e8e8e8, #e8e8e8) 438px 0 / 750px 100% no-repeat,
    #fff;
}
.ruler-top span { flex: none; width: 200px; }
.ruler-top .end { width: 14px; letter-spacing: 0; }
.stage-main { flex: 1; display: flex; min-height: 0; }
.ruler-left {
  width: 54px; display: flex; flex-direction: column; overflow: hidden;
  border-right: 2px solid #b3b3b3;
  font-size: 20px; line-height: 38px; letter-spacing: .3px;
  background:
    linear-gradient(#b3b3b3 2px, transparent 2px) 0 66px / 100% 200px repeat-y,
    linear-gradient(#b3b3b3 2px, transparent 2px) 36px 6px / 16px 20px repeat-y,
    linear-gradient(#e8e8e8, #e8e8e8) 0 1284px / 100% 116px no-repeat,
    #fff;
}
.ruler-left span { flex: none; height: 200px; width: 38px; writing-mode: vertical-rl; transform: rotate(180deg); padding-top: 5px; }
.ruler-left .first { height: 66px; }
.canvas { flex: 1; padding-left: 382px; background: #f1f1f1; }
.board-name { height: 66px; padding: 31px 0 0 6px; line-height: 28px; color: #949494; }
.board { width: 750px; height: 1334px; background: #fff; box-shadow: 0 1px 5px rgba(0,0,0,.5); display: flex; align-items: flex-end; }
.shapes { position: relative; width: 751px; height: 116px; flex: none; display: flex; box-shadow: 0 0 0 1px #9a8f8f, 0 4px 8px rgba(0,0,0,.4); }
.shape { width: 376px; }
.a { background: #e84c3d; border-right: 1px solid #a58a85; }
.b { background: #3598dc; }
.h { position: absolute; width: 12px; height: 12px; background: linear-gradient(#fff, #dcdcdc); box-shadow: 0 1px 3px rgba(0,0,0,.75); }
.tl, .ml, .bl { left: -6px; }
.tc, .bc { left: 370px; }
.tr, .mr, .br { left: 746px; }
.tl, .tc, .tr { top: -6px; }
.ml, .mr { top: 52px; }
.bl, .bc, .br { top: 110px; }

/* inspector */
.inspector { width: 428px; display: flex; flex-direction: column; border-left: 2px solid #b7b7b7; background: #e6e6e6; letter-spacing: .62px; }
.align { height: 54px; border-bottom: 2px solid #b9b9b9; background: #f5f5f5; }
.geometry, .radius, .blend-row, .fill-row, .head { border-bottom: 2px solid; border-image: linear-gradient(90deg, #bbb, #c4c4c4 50%, #e4e4e4 98%) 1; }
.geometry { height: 230px; padding: 17px 0 0 14px; }
.grow { height: 70px; display: grid; grid-template-columns: 127px 116px 34px 116px; line-height: 39px; }
.grow label { padding-top: 0; letter-spacing: .5px; }
small { display: block; font-size: 18px; line-height: 30px; text-align: center; letter-spacing: .8px; padding-right: 1px; }
.up { line-height: 25px; }
.down { line-height: 35px; }
.field { height: 36px; padding-left: 6px; border: 1px solid #a9a9a9; background: #fff; line-height: 37px; letter-spacing: .3px; }
.narrow { width: 84px; }
.lock { padding: 10px 0 0 10px; }
.flip { width: 117px; height: 36px; border-radius: 7px; background: #fff; box-shadow: 0 0 0 1px #c4c4c4, 0 1px 1px #aaa; }
.radius, .opacity-row, .blend-row { display: flex; align-items: center; padding-left: 14px; }
.radius label, .opacity-row label, .blend-row label { width: 127px; padding-top: 3px; }
.radius { height: 72px; }
.slider { width: 160px; height: 22px; margin-right: 22px; display: flex; align-items: center; background: linear-gradient(#b1b1b1, #b1b1b1) 12px 8px / 148px 6px no-repeat; }
.slider i { width: 22px; height: 22px; border-radius: 50%; background: #fff; box-shadow: 0 0 0 1px #c0c0c0, 0 1px 2px rgba(0,0,0,.3); margin-left: 1px; }
.full { background: linear-gradient(#409bf9, #409bf9) 1px 8px / 148px 6px no-repeat; }
.full i { margin-left: 139px; }
.shared { height: 74px; margin-right: 2px; padding: 0 24px 0 19px; display: flex; align-items: center; justify-content: space-between; background: #fff; border-bottom: 2px solid #c2c2c2; color: #222; letter-spacing: .45px; }
.shared span { padding-top: 4px; }
.opacity-row { height: 70px; }
.blend-row { height: 60px; padding-bottom: 18px; }
.select { flex: none; width: 265px; height: 38px; margin-left: 1px; display: flex; align-items: center; border-radius: 7px; background: #fff; overflow: hidden; box-shadow: 0 0 0 1px #c6c6c6, 0 1px 1px #aaa; color: #222; letter-spacing: .5px; }
.select span { flex: 1; padding: 1px 0 0 15px; }
.select em { width: 33px; height: 40px; display: flex; align-items: center; justify-content: center; background: linear-gradient(#6db3f9, #157dfb); }
.head { height: 52px; display: flex; align-items: center; padding: 0 18px 0 14px; }
h4 { margin: 0; padding-top: 3px; font-size: 22.500px; color: #4d4d4d; letter-spacing: .5px; }
.plus { margin-left: auto; }
.fills { background: linear-gradient(90deg, #f9f9f9, #e6e6e6 88%); padding-right: 20px; }
.gear { margin-left: auto; }
.gear + .plus { margin-left: 17px; }
.updown { margin-left: 12px; }
.box { margin-left: auto; width: 24px; height: 24px; border: 1.500px solid #b9b9b9; border-radius: 5px; background: #fff; }
.fill-row { height: 104px; display: flex; padding: 18px 0 0 14px; }
.check { width: 24px; height: 24px; margin-top: 8px; border-radius: 5px; background: #409bf9; }
.well-col { width: 64px; margin: 0 23px 0 16px; }
.well { height: 38px; border-radius: 7px; background: #fff; box-shadow: 0 0 0 1px #c0c0c0, 0 1px 1px #aaa; padding: 6px; }
.well i { height: 26px; border: 2px solid #b93c30; border-radius: 4px; background: #e84c3d; }
.blend-col { width: 164px; margin-right: 18px; padding-top: 1px; }
.blend-col .select { width: 163px; }
.fill-row small { line-height: 43px; }
.blend-col small { padding-right: 12px; }
.well-col small { line-height: 46px; }
.op-col { padding-top: 1px; }
.op-col small { line-height: 46px; }
.blank { flex: 1; }
.export-foot { height: 64px; display: flex; align-items: center; padding: 0 18px 2px 14px; border-top: 2px solid #c9c9c9; background: linear-gradient(#fafafa, #ececec); }
.export-foot h4 { padding-top: 0; }

/* open menu */
.dropdown {
  position: absolute; left: 504px; top: 44px; width: 488px; height: 606px;
  margin: 0; padding: 8px 0; list-style: none;
  border-radius: 0 0 10px 10px; overflow: hidden;
  color: #fff; font-size: 28.500px; line-height: 38px; letter-spacing: .58px;
  background:
    radial-gradient(ellipse 240px 230px at 0 250px, #5f5c75, rgba(95,92,117,0)),
    linear-gradient(#725e68 0, #7b686f 30%, #7a696e 75%, #6e6268 100%);
  box-shadow: 0 0 0 1px rgba(0,0,0,.2), 0 10px 26px rgba(0,0,0,.35);
}
.dropdown li { height: 38px; padding: 0 20px 0 41.500px; display: flex; align-items: center; justify-content: space-between; }
.dropdown .sel { background: #1d77f2; }
.dropdown .dis { color: #b0a1a9; letter-spacing: .4px; }
.dropdown .sep { height: 24px; padding: 0; }
.sep::before { content: ""; flex: 1; height: 4px; background: rgba(190,170,190,.5); }
.dropdown li i { width: 17px; height: 18px; margin-right: 5px; background: #fff; clip-path: polygon(0 0, 100% 50%, 0 100%); }
kbd { display: flex; font: inherit; letter-spacing: 0; align-items: center; }
.ctrl { font-family: "DejaVu Sans", sans-serif; font-size: 26px; width: 24px; padding-top: 2px; }
.cmd { font-family: "DejaVu Sans", sans-serif; font-size: 27px; width: 26px; }
```
